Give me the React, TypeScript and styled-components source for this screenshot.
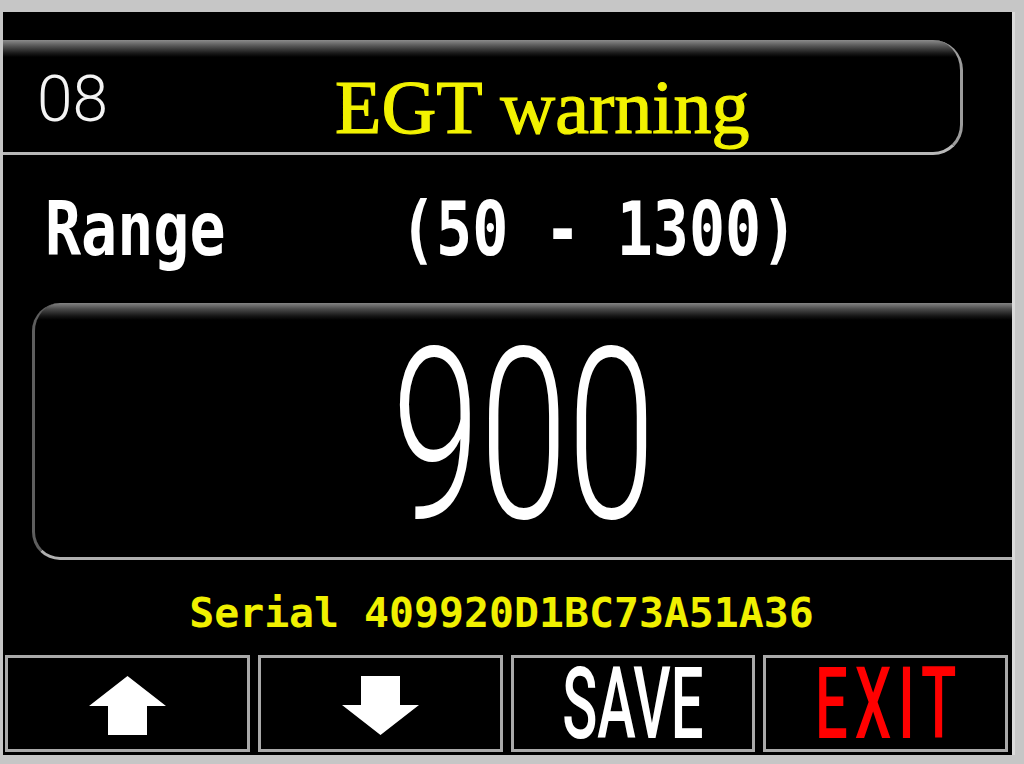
import React from "react";
import styled, { createGlobalStyle } from "styled-components";

const GlobalStyle = createGlobalStyle`
  html, body {
    margin: 0;
    padding: 0;
    background: #c6c6c6;
  }
  body {
    width: 1024px;
    height: 764px;
    overflow: hidden;
    font-family: "DejaVu Sans Mono", monospace;
  }
`;

const Frame = styled.div`
  width: 1024px;
  height: 764px;
  box-sizing: border-box;
  padding: 12px 0 0 3px;
  background: #c6c6c6;
`;

const Screen = styled.div`
  width: 1009px;
  height: 743px;
  box-sizing: border-box;
  padding-top: 28px;
  background: #000;
  display: flex;
  flex-direction: column;
  box-shadow: 3px 0 0 #dadada;
`;

/* header strip with the parameter number and its name */
const TitleBar = styled.div`
  flex: none;
  width: 960px;
  height: 115px;
  box-sizing: border-box;
  display: flex;
  align-items: center;
  border-radius: 0 30px 30px 0;
  border-right: 3px solid #9c9c9c;
  border-bottom: 3px solid #b8b8b8;
  background: linear-gradient(to bottom, #8c8c8c 0, #555 6px, #1a1a1a 13px, #000 17px);
`;

const Index = styled.span`
  width: 332px;
  box-sizing: border-box;
  padding-left: 34px;
  margin-top: 8px;
  font-family: Roboto, "Liberation Sans", sans-serif;
  font-weight: 300;
  font-size: 64px;
  line-height: 1;
  color: #f4f4f4;
`;

const Title = styled.span`
  display: inline-block;
  margin-top: 22px;
  font-family: "Liberation Serif", "DejaVu Serif", serif;
  font-weight: 400;
  font-size: 76px;
  line-height: 1;
  color: #f2f200;
  white-space: pre;
  -webkit-text-stroke: 1.2px #f2f200;
`;

const RangeRow = styled.div`
  flex: none;
  height: 148px;
  display: flex;
  align-items: center;
  padding-left: 42px;
`;

const RangeText = styled.span<{ $width?: number }>`
  display: inline-block;
  width: ${(p) => (p.$width ? `${p.$width}px` : "auto")};
  font-family: "DejaVu Sans Mono", monospace;
  font-weight: 700;
  font-size: 60px;
  line-height: 1;
  color: #fff;
  white-space: pre;
  transform: scaleY(1.24);
  transform-origin: left center;
`;

const ValueBox = styled.div`
  flex: none;
  margin-left: 29px;
  height: 257px;
  box-sizing: border-box;
  display: flex;
  align-items: center;
  justify-content: center;
  border-left: 3px solid #5e5e5e;
  border-bottom: 3px solid #b0b0b0;
  border-radius: 28px 0 0 28px;
  background: linear-gradient(to bottom, #848484 0, #4a4a4a 6px, #151515 13px, #000 17px);
`;

const ValueText = styled.span`
  display: inline-block;
  margin-top: 12px;
  font-family: Roboto, "Liberation Sans", sans-serif;
  font-weight: 300;
  font-size: 240px;
  line-height: 1;
  color: #fff;
  transform: scaleX(0.66);
`;

const SerialRow = styled.div`
  flex: none;
  height: 95px;
  box-sizing: border-box;
  padding: 10px 12px 0 0;
  display: flex;
  align-items: center;
  justify-content: center;
`;

const Serial = styled.span`
  font-family: "DejaVu Sans Mono", monospace;
  font-weight: 700;
  font-size: 41.5px;
  line-height: 1;
  color: #f0f000;
  white-space: pre;
`;

const KeyRow = styled.div`
  flex: none;
  height: 97px;
  box-sizing: border-box;
  padding: 0 4px 0 2px;
  display: grid;
  grid-template-columns: repeat(4, minmax(0, 1fr));
  gap: 8px;
`;

const Key = styled.button`
  box-sizing: border-box;
  height: 97px;
  margin: 0;
  padding: 0;
  border: 3px solid #a9a9a9;
  background: #000;
  display: flex;
  align-items: center;
  justify-content: center;
  cursor: pointer;
`;

const KeyLabel = styled.span<{ $color: string; $spacing?: number }>`
  display: inline-block;
  font-family: Roboto, "Liberation Sans", sans-serif;
  font-weight: 500;
  font-size: 58px;
  line-height: 44px;
  color: ${(p) => p.$color};
  letter-spacing: ${(p) => p.$spacing || 0}px;
  padding-left: ${(p) => p.$spacing || 0}px;
  transform: scaleY(1.72);
`;

const Arrow = ({ down }: { down?: boolean }) => (
  <svg width="77" height="59" viewBox="0 0 77 59" style={{ marginTop: 4 }}>
    <polygon
      fill="#fff"
      points="38.5,0 77,30 58,30 58,59 19,59 19,30 0,30"
      transform={down ? "rotate(180 38.5 29.5)" : undefined}
    />
  </svg>
);

const App = () => {
  return (
    <Frame>
      <GlobalStyle />
      <Screen>
        <TitleBar>
          <Index>08</Index>
          <Title>EGT warning</Title>
        </TitleBar>

        <RangeRow>
          <RangeText $width={355}>Range</RangeText>
          <RangeText>(50 - 1300)</RangeText>
        </RangeRow>

        <ValueBox>
          <ValueText>900</ValueText>
        </ValueBox>

        <SerialRow>
          <Serial>Serial 409920D1BC73A51A36</Serial>
        </SerialRow>

        <KeyRow>
          <Key>
            <Arrow />
          </Key>
          <Key>
            <Arrow down />
          </Key>
          <Key>
            <KeyLabel $color="#fff">SAVE</KeyLabel>
          </Key>
          <Key>
            <KeyLabel $color="#f00" $spacing={7}>
              EXIT
            </KeyLabel>
          </Key>
        </KeyRow>
      </Screen>
    </Frame>
  );
};

export default App;
